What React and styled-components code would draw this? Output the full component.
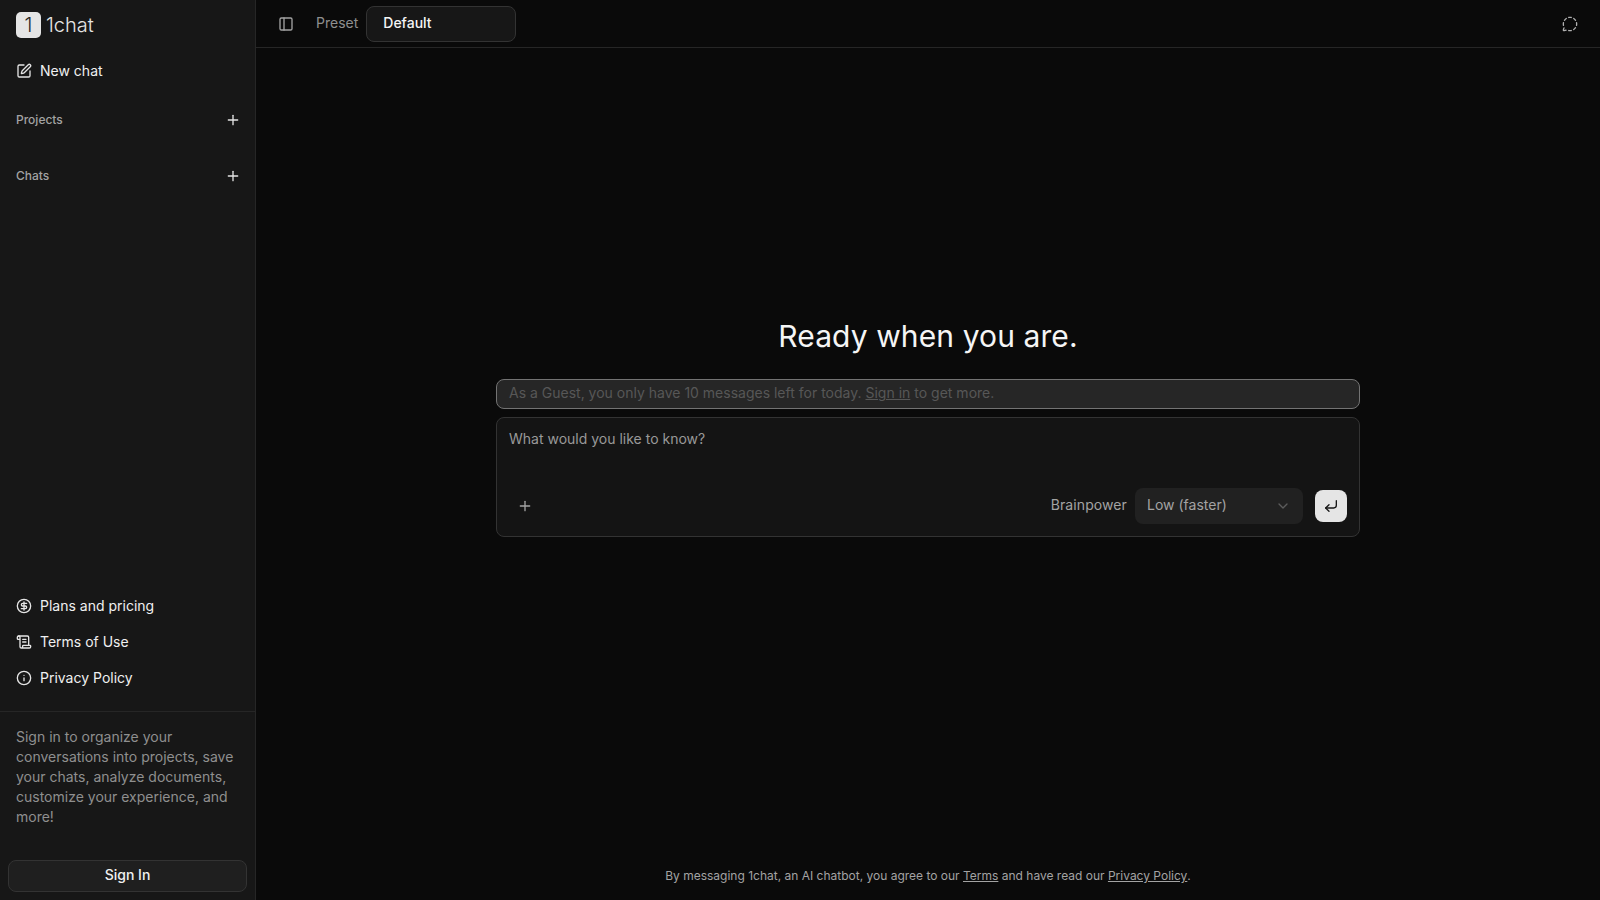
import React from "react";
import styled, { createGlobalStyle } from "styled-components";
import {
  SquarePen, Plus, CircleDollarSign, ScrollText, Info, PanelLeft,
  CornerDownLeft, ChevronDown, MessageCircleDashed,
} from "lucide-react";

const Global = createGlobalStyle`
  html, body { margin: 0; padding: 0; height: 100%; background: #0a0a0a; }
  body { font-family: Inter, "Liberation Sans", sans-serif; font-size: 14px; color: #fafafa; }
  * { box-sizing: border-box; }
  button { font-family: inherit; }
  #root { height: 100%; }
`;

const Shell = styled.div`display: flex; width: 100%; height: 900px; overflow: hidden; background: #0a0a0a;`;
const Sidebar = styled.aside`
  width: 256px; flex: none; display: flex; flex-direction: column;
  background: #171717; border-right: 1px solid #262626;
`;
const Brand = styled.div`height: 48px; display: flex; align-items: center; gap: 5px; padding: 1px 16px 0;`;
const BrandMark = styled.span`
  width: 25px; height: 26px; border-radius: 5px; background: #e5e5e5; color: #262626;
  display: flex; align-items: center; justify-content: center; font-size: 20px; font-weight: 300;
`;
const BrandName = styled.span`font-size: 20px; font-weight: 300; color: #e5e5e5;`;
const NavRow = styled.a`
  height: 36px; display: flex; align-items: center; gap: 8px; padding: 0 16px;
  color: #f0f0f0; font-size: 14px; line-height: 20px;
  svg { color: #e5e5e5; flex: none; }
`;
const NewChatRow = styled(NavRow)`margin-top: 5px;`;
const SectionHead = styled.div`
  height: 20px; display: flex; align-items: center; justify-content: space-between;
  padding: 0 14px 0 16px; font-size: 12px; font-weight: 500; color: #a3a3a3; margin-top: ${p => p.$top}px;
  svg { color: #e5e5e5; position: relative; top: 1px; }
`;
const Spacer = styled.div`flex: 1;`;
const SideDivider = styled.div`height: 1px; background: #262626; margin-top: 15px;`;
const Pitch = styled.p`margin: 15px 16px 0; font-size: 14px; line-height: 20px; color: #8f8f8f;`;
const SignInButton = styled.button`
  height: 32px; margin: 33px 8px 8px; padding: 0 0 3px; border-radius: 8px; background: #1f1f1f;
  border: 1px solid #333; color: #f0f0f0; font-size: 14px; font-weight: 500;
`;
const Main = styled.main`flex: 1; min-width: 0; display: flex; flex-direction: column;`;
const TopBar = styled.header`
  height: 48px; flex: none; display: flex; align-items: center; padding: 1px 20px 0 22px;
  border-bottom: 1px solid #262626;
`;
const IconSlot = styled.span`display: flex; color: #a3a3a3;`;
const PresetLabel = styled.span`margin-left: 22px; padding-bottom: 4px; color: #8f8f8f; font-size: 14px;`;
const PresetBox = styled.div`
  width: 150px; height: 36px; margin-left: 8px; padding: 0 16px 3px; display: flex; align-items: center;
  background: #171717; border: 1px solid #333; border-radius: 8px;
  color: #f5f5f5; font-size: 14px; font-weight: 500;
`;
const TopEnd = styled.span`margin-left: auto; display: flex; color: #b0b0b0; padding-right: 2px;`;
const Center = styled.div`flex: 1; display: flex; flex-direction: column; align-items: center; padding-top: 268px;`;
const Heading = styled.h1`margin: 0; font-size: 30px; line-height: 40px; font-weight: 375; color: #f5f5f5; letter-spacing: 0.1px;`;
const Column = styled.div`width: 864px; margin-top: 23px; display: flex; flex-direction: column; gap: 8px;`;
const Notice = styled.div`
  height: 30px; padding: 0 12px 3px; display: flex; align-items: center; gap: 4px;
  background: #262626; border: 1px solid #737373; border-radius: 8px; color: #575757; font-size: 14px;
  a { color: #575757; text-decoration: underline; }
`;
const Composer = styled.div`
  height: 120px; display: flex; flex-direction: column; justify-content: space-between;
  background: #141414; border: 1px solid #333; border-radius: 8px; padding: 11px 12px 12px;
`;
const Placeholder = styled.div`color: #999; font-size: 14px; line-height: 20px;`;
const ComposerBar = styled.div`display: flex; align-items: center;`;
const AddButton = styled.span`display: flex; color: #a3a3a3; margin-left: 8px;`;
const BarLabel = styled.span`margin-left: auto; padding-bottom: 3px; color: #a3a3a3; font-size: 14px; letter-spacing: 0.1px;`;
const Select = styled.div`
  width: 168px; height: 36px; margin-left: 8px; padding: 0 12px; display: flex; align-items: center;
  justify-content: space-between; background: #212121; border-radius: 8px; color: #a3a3a3; font-size: 14px;
  span { padding-bottom: 3px; }
  svg { color: #5c5c5c; }
`;
const SendButton = styled.span`
  width: 32px; height: 32px; margin-left: 12px; border-radius: 8px; background: #e5e5e5; color: #171717;
  display: flex; align-items: center; justify-content: center;
`;
const Legal = styled.footer`
  height: 48px; flex: none; display: flex; justify-content: center; align-items: center;
  font-size: 12px; color: #a3a3a3; padding-bottom: 1px;
  white-space: pre;
  a { color: #a3a3a3; text-decoration: underline; }
`;

export default function App() {
  return (
    <>
      <Global />
      <Shell>
        <Sidebar>
          <Brand><BrandMark>1</BrandMark><BrandName>1chat</BrandName></Brand>
          <NewChatRow><SquarePen size={16} />New chat</NewChatRow>
          <SectionHead $top={20}>Projects<Plus size={16} /></SectionHead>
          <SectionHead $top={36}>Chats<Plus size={16} /></SectionHead>
          <Spacer />
          <NavRow><CircleDollarSign size={16} />Plans and pricing</NavRow>
          <NavRow><ScrollText size={16} />Terms of Use</NavRow>
          <NavRow><Info size={16} />Privacy Policy</NavRow>
          <SideDivider />
          <Pitch>Sign in to organize your conversations into projects, save your chats, analyze documents, customize your experience, and more!</Pitch>
          <SignInButton>Sign In</SignInButton>
        </Sidebar>
        <Main>
          <TopBar>
            <IconSlot><PanelLeft size={16} /></IconSlot>
            <PresetLabel>Preset</PresetLabel>
            <PresetBox>Default</PresetBox>
            <TopEnd><MessageCircleDashed size={16} /></TopEnd>
          </TopBar>
          <Center>
            <Heading>Ready when you are.</Heading>
            <Column>
              <Notice><span>As a Guest, you only have 10 messages left for today.</span><a>Sign in</a><span>to get more.</span></Notice>
              <Composer>
                <Placeholder>What would you like to know?</Placeholder>
                <ComposerBar>
                  <AddButton><Plus size={16} /></AddButton>
                  <BarLabel>Brainpower</BarLabel>
                  <Select><span>Low (faster)</span><ChevronDown size={16} /></Select>
                  <SendButton><CornerDownLeft size={16} /></SendButton>
                </ComposerBar>
              </Composer>
            </Column>
          </Center>
          <Legal>By messaging 1chat, an AI chatbot, you agree to our <a>Terms</a> and have read our <a>Privacy Policy</a>.</Legal>
        </Main>
      </Shell>
    </>
  );
}
